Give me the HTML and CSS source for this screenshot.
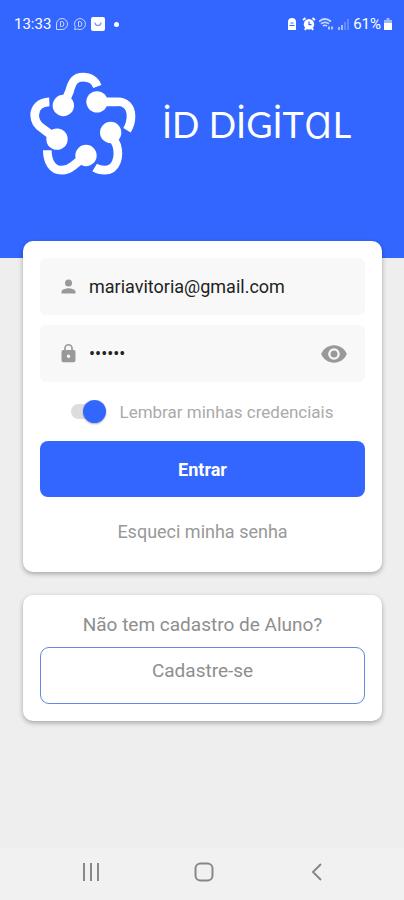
FILE: index.html
```html
<!DOCTYPE html>
<html lang="pt-BR">
<head>
    <meta charset="UTF-8">
    <meta name="viewport" content="width=device-width, initial-scale=1.0">
    <title>iD Digital</title>
    <link rel="stylesheet" href="styles.css">
</head>
<body>

    <header class="header">
        <!-- Status bar -->
        <div class="status-bar">
            <div class="status-group">
                <span class="status-text">13:33</span>
                <svg class="status-icon" viewBox="0 0 14 14" fill="none" stroke="#c9d6ff"><path d="M1.5 12.5V7a5.5 5.5 0 1 1 5.5 5.5z"/><path d="M5.500 4.500v5h1.200a2.200 2.500 0 0 0 0-5z"/></svg>
                <svg class="status-icon" viewBox="0 0 14 14" fill="none" stroke="#c9d6ff"><path d="M1.500 12.500 2.300 10A5.500 5.500 0 1 1 4.500 12z"/><path d="M5.500 4.500v5h1.200a2.200 2.500 0 0 0 0-5z"/></svg>
                <svg class="status-icon" viewBox="0 0 14 14"><rect width="14" height="14" rx="2" fill="#fff"/><path d="M4 5.500c0 4 6 4 6 0" fill="none" stroke="#7d9bff" stroke-width="1.300"/></svg>
                <span class="status-dot"></span>
            </div>
            <div class="status-group status-right">
                <svg class="status-icon" viewBox="0 0 14 14"><path d="M3 13V5a4 4 0 0 1 8 0v8z" fill="#fff"/><path d="M4.500 8.500h5M5.500 6h3" stroke="#3366ff"/></svg>
                <svg class="status-icon" viewBox="0 0 14 14"><path d="M1 3 3.500 1M13 3l-2.500-2M3 13l1-2M11 13l-1-2" stroke="#fff" stroke-width="2"/><circle cx="7" cy="7.300" r="5.200" fill="#fff"/><path d="M7 4.500v3.200h2.500" fill="none" stroke="#3366ff" stroke-width="1.200"/></svg>
                <svg class="status-icon" viewBox="0 0 14 14" fill="none" stroke="#c9d6ff" stroke-width="1.700"><path d="M0 4.500q6-5 12 0M2 6.800q4-3 8 0M4 9q2-1.500 4 0"/><path d="M10 12.500v-3M13 9.500v3"/></svg>
                <svg class="status-icon" viewBox="0 0 14 14"><path d="M2 13v-3h2v3zM5 13V8h2v5z" fill="#a9beff"/><path d="M8 13V5h2v8zM11 13V2h2v11z" fill="#6289ff"/></svg>
                <span class="status-text">61%</span>
                <svg class="battery" viewBox="0 0 8 14"><path d="M2.500 1h3v2H8v4H0V3h2.500z" fill="#9fb7ff"/><path d="M0 6h8v7H0z" fill="#fff"/></svg>
            </div>
        </div>

        <!-- Logo -->
        <div class="brand">
            <svg class="brand-logo" viewBox="20 30 330 320">
                <g fill="none" stroke="#fff" stroke-width="26">
                    <path d="M126 136L144 95C152 65 160 51 185 51C206 51 222 62 228 79"/>
                    <path d="M227 125H286C312 123 329 140 329 168C329 184 325 197 317 210"/>
                    <path d="M84 125C56 126 40 143 40 165C40 184 50 197 66 207L107 237"/>
                    <path d="M78 270C78 303 92 330 121 330C134 330 144 326 155 317L194 286"/>
                    <path d="M268 217L286 255C296 290 285 330 250 330C238 330 228 327 220 322"/>
                </g>
                <g fill="#fff">
                    <circle cx="126" cy="136" r="32"/>
                    <circle cx="227" cy="125" r="32"/>
                    <circle cx="107" cy="237" r="32"/>
                    <circle cx="268" cy="217" r="32"/>
                    <circle cx="194" cy="286" r="32"/>
                </g>
            </svg>
            <!-- Turkish casing keeps the dot above the capital I -->
            <h1 class="brand-name" lang="tr">iD DiGiT<span class="brand-a">a</span>L</h1>
        </div>
    </header>

    <main class="content">
        <!-- Login card -->
        <form class="card login">
            <label class="field">
                <svg class="field-icon" viewBox="0 0 24 24"><circle cx="12" cy="8" r="4"/><path d="M12 14c-2.670 0-8 1.340-8 4v2h16v-2c0-2.660-5.330-4-8-4z"/></svg>
                <input type="email" aria-label="E-mail" value="mariavitoria@gmail.com">
            </label>
            <div class="field">
                <svg class="field-icon" viewBox="0 0 24 24"><path d="M18 8h-1V6A5 5 0 0 0 7 6v2H6a2 2 0 0 0-2 2v10a2 2 0 0 0 2 2h12a2 2 0 0 0 2-2V10a2 2 0 0 0-2-2zm-6 9a2 2 0 1 1 0-4 2 2 0 0 1 0 4zm3.100-9H8.900V6a3.100 3.100 0 0 1 6.200 0z"/></svg>
                <input type="password" aria-label="Senha" value="123456">
                <button type="button" class="show-password" aria-label="Mostrar senha">
                    <svg viewBox="0 0 24 24"><path d="M12 4.500C7 4.500 2.730 7.610 1 12c1.730 4.390 6 7.500 11 7.500s9.270-3.110 11-7.500c-1.730-4.390-6-7.500-11-7.500zM12 17a5 5 0 1 1 0-10 5 5 0 0 1 0 10zm0-8a3 3 0 1 0 0 6 3 3 0 0 0 0-6z"/></svg>
                </button>
            </div>
            <label class="remember">
                <input type="checkbox" class="switch" checked>
                <span>Lembrar minhas credenciais</span>
            </label>
            <button type="submit" class="btn-primary">Entrar</button>
            <a class="forgot" href="#">Esqueci minha senha</a>
        </form>

        <!-- Sign up card -->
        <section class="card signup">
            <p>Não tem cadastro de Aluno?</p>
            <a class="btn-outline" href="#">Cadastre-se</a>
        </section>
    </main>

    <!-- Android navigation -->
    <nav class="nav-bar">
        <button type="button" aria-label="Recentes"><svg viewBox="0 0 20 20"><path d="M3 1v18M10 1v18M17 1v18"/></svg></button>
        <button type="button" aria-label="Início"><svg viewBox="0 0 20 20"><rect x="1.500" y="1.500" width="17" height="17" rx="5"/></svg></button>
        <button type="button" aria-label="Voltar"><svg viewBox="0 0 20 20"><path d="M14 2 6 10l8 8"/></svg></button>
    </nav>

</body>
</html>
```
FILE: styles.css
```css
* {
    margin: 0;
    padding: 0;
    box-sizing: border-box;
}

body {
    font-family: Roboto, sans-serif;
    font-size: 18px;
    background-color: #eee;
    color: #999;
    min-height: 100vh;
    display: flex;
    flex-direction: column;
}

button, input {
    font-family: inherit;
    border: none;
    background: none;
}

a {
    color: inherit;
    text-decoration: none;
}

svg {
    display: block;
    flex-shrink: 0;
}

.header {
    height: 258px;
    background-color: #3366ff;
    color: #fff;
}

/* Status bar */
.status-bar {
    display: flex;
    justify-content: space-between;
    align-items: center;
    height: 48px;
    padding: 0 12px 0 14px;
}

.status-group {
    display: flex;
    align-items: center;
    gap: 4px;
}

.status-right {
    gap: 3px;
}

.status-text {
    font-size: 15px;
    font-weight: 400;
}

.status-icon {
    width: 14px;
    height: 14px;
}

.status-dot {
    width: 5px;
    height: 5px;
    margin-left: 5px;
    border-radius: 50%;
    background-color: #fff;
}

.battery {
    width: 8px;
    height: 14px;
}

/* Logo */
.brand {
    display: flex;
    align-items: center;
    gap: 24px;
    padding: 22px 28px 0;
}

.brand-logo {
    width: 110px;
    height: 107px;
}

.brand-name {
    font-family: Lato, sans-serif;
    font-size: 36px;
    font-weight: 400;
    line-height: 48px;
    text-transform: uppercase;
    white-space: nowrap;
}

/* single-storey a, as tall as the capitals */
.brand-a {
    font-family: Inter, sans-serif;
    font-size: 48px;
    font-weight: 300;
    line-height: 0;
    text-transform: none;
    font-feature-settings: "cv11";
}

/* Cards */
.content {
    flex: 1;
    display: flex;
    flex-direction: column;
    gap: 23px;
    margin-top: -17px;
    padding: 0 22px 0 23px;
}

.card {
    display: flex;
    flex-direction: column;
    padding: 17px;
    border-radius: 10px;
    background-color: #fff;
    box-shadow: 0 2px 5px rgba(0, 0, 0, 0.3);
}

.login {
    padding-bottom: 5px;
}

.field {
    display: flex;
    align-items: center;
    gap: 10px;
    height: 57px;
    padding: 0 17px 0 18px;
    border-radius: 6px;
    background-color: #f8f8f8;
}

.field + .field {
    margin-top: 10px;
}

.field-icon {
    width: 21px;
    height: 21px;
    fill: #999;
}

.field input {
    flex: 1;
    min-width: 0;
    font-size: 18px;
    color: #222;
    outline: none;
}

.show-password svg {
    width: 28px;
    height: 28px;
    fill: #999;
}

.remember {
    display: flex;
    justify-content: center;
    align-items: center;
    gap: 13px;
    height: 59px;
    font-size: 17px;
    color: #aaa;
}

.switch {
    appearance: none;
    display: flex;
    align-items: center;
    justify-content: flex-end;
    width: 35px;
    height: 15px;
    border-radius: 8px;
    background-color: #ddd;
}

.switch::before {
    content: "";
    width: 23px;
    height: 23px;
    flex-shrink: 0;
    border-radius: 50%;
    background-color: #3366ff;
    box-shadow: 0 1px 2px rgba(0, 0, 0, 0.3);
}

.btn-primary {
    height: 56px;
    border-radius: 8px;
    background-color: #3366ff;
    color: #fff;
    font-size: 18px;
    font-weight: 700;
    cursor: pointer;
}

.forgot {
    line-height: 70px;
    text-align: center;
}

.signup {
    text-align: center;
}

.signup p {
    font-size: 19px;
    line-height: 26px;
    margin-bottom: 9px;
    color: #8e8e8e;
}

.btn-outline {
    height: 57px;
    border: 1px solid #6688e0;
    border-radius: 9px;
    font-size: 19px;
    line-height: 46px;
    color: #8e8e8e;
}

/* Navigation bar */
.nav-bar {
    display: flex;
    justify-content: center;
    align-items: center;
    gap: 93px;
    height: 52px;
    padding: 0 0 4px 4px;
    background-color: #f1f1f1;
}

.nav-bar svg {
    width: 20px;
    height: 20px;
    fill: none;
    stroke: #888;
    stroke-width: 2;
}
```
